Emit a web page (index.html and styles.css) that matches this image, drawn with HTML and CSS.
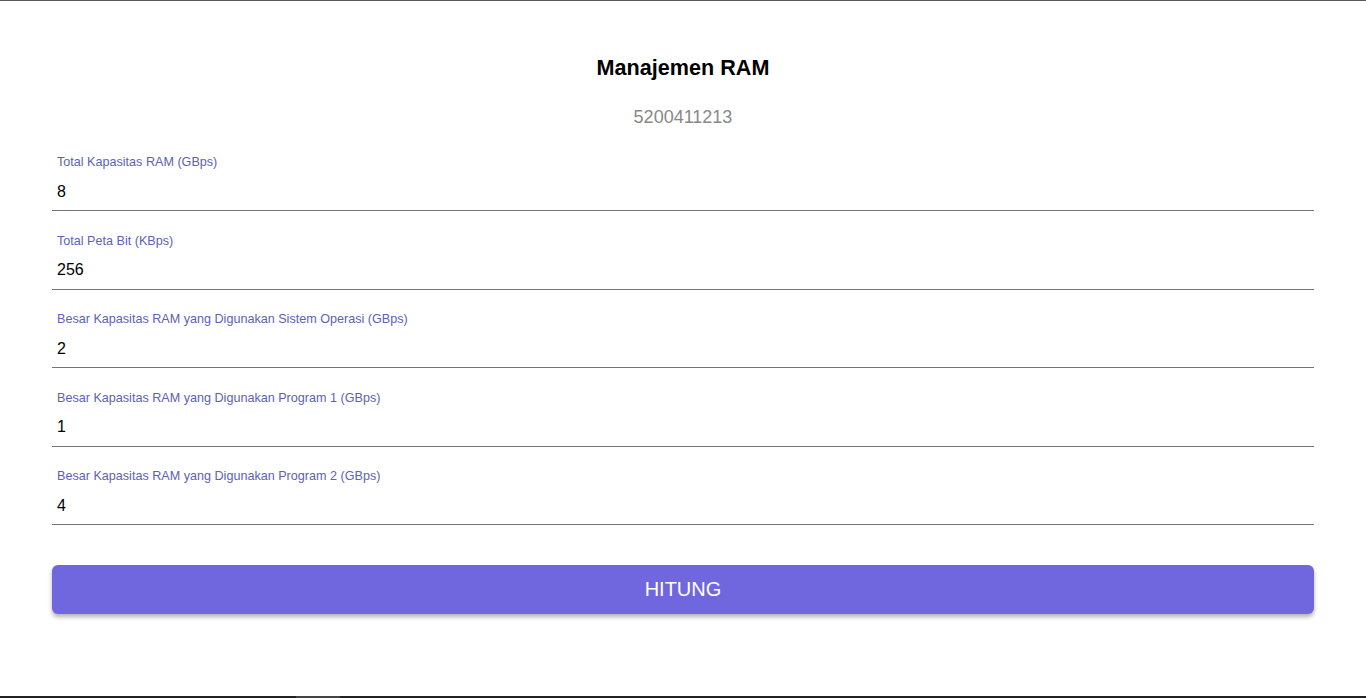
FILE: index.html
```html
<!DOCTYPE html>
<html lang="id">
<head>
<meta charset="utf-8">
<title>Manajemen RAM</title>
<link rel="stylesheet" href="styles.css">
</head>
<body>
<div class="topline"></div>
<main class="page">
  <h1 class="title">Manajemen RAM</h1>
  <p class="nim">5200411213</p>
  <form class="form">
    <div class="field">
      <label class="label">Total Kapasitas RAM (GBps)</label>
      <input class="input" type="text" value="8">
    </div>
    <div class="field">
      <label class="label">Total Peta Bit (KBps)</label>
      <input class="input" type="text" value="256">
    </div>
    <div class="field">
      <label class="label">Besar Kapasitas RAM yang Digunakan Sistem Operasi (GBps)</label>
      <input class="input" type="text" value="2">
    </div>
    <div class="field">
      <label class="label">Besar Kapasitas RAM yang Digunakan Program 1 (GBps)</label>
      <input class="input" type="text" value="1">
    </div>
    <div class="field">
      <label class="label">Besar Kapasitas RAM yang Digunakan Program 2 (GBps)</label>
      <input class="input" type="text" value="4">
    </div>
    <button class="btn" type="button">HITUNG</button>
  </form>
</main>
<div class="bottombar"><span class="thumb"></span></div>
</body>
</html>
```
FILE: styles.css
```css
* { box-sizing: border-box; }
html, body { margin: 0; padding: 0; height: 100%; }
body {
  font-family: "Liberation Sans", Arial, sans-serif;
  background: #fff;
  color: #000;
  display: flex;
  flex-direction: column;
  min-height: 100vh;
  overflow: hidden;
}
.topline { height: 1px; background: #5a5a5a; flex: none; }
.page {
  flex: 1;
  padding: 0 52px;
}
.title {
  margin: 54px 0 0;
  text-align: center;
  font-size: 21.6px;
  line-height: 25px;
  font-weight: bold;
}
.nim {
  margin: 26px 0 0;
  text-align: center;
  font-size: 18px;
  line-height: 22px;
  color: #888;
}
.form { margin-top: 26px; display: flex; flex-direction: column; }
.field { display: flex; flex-direction: column; margin-bottom: 21.5px; }
.label {
  font-size: 12.6px;
  line-height: 14px;
  margin-top: 1px;
  color: #5c62b8;
  padding-left: 5px;
}
.input {
  border: none;
  border-bottom: 1px solid #757575;
  font-family: "Liberation Sans", Arial, sans-serif;
  font-size: 16px;
  line-height: 20px;
  padding: 13px 5px 9px;
  height: 42px;
  color: #000;
  outline: none;
  background: transparent;
}
.btn {
  margin-top: 18.5px;
  height: 49px;
  border: none;
  border-radius: 6px;
  background: #7067de;
  color: #fff;
  font-family: "Liberation Sans", Arial, sans-serif;
  font-size: 20px;
  box-shadow: 0 3px 4px rgba(0,0,0,0.3);
}
.bottombar {
  flex: none;
  height: 2px;
  background: #222;
  display: flex;
}
.thumb { margin-left: 296px; width: 44px; background: #444; }
```
